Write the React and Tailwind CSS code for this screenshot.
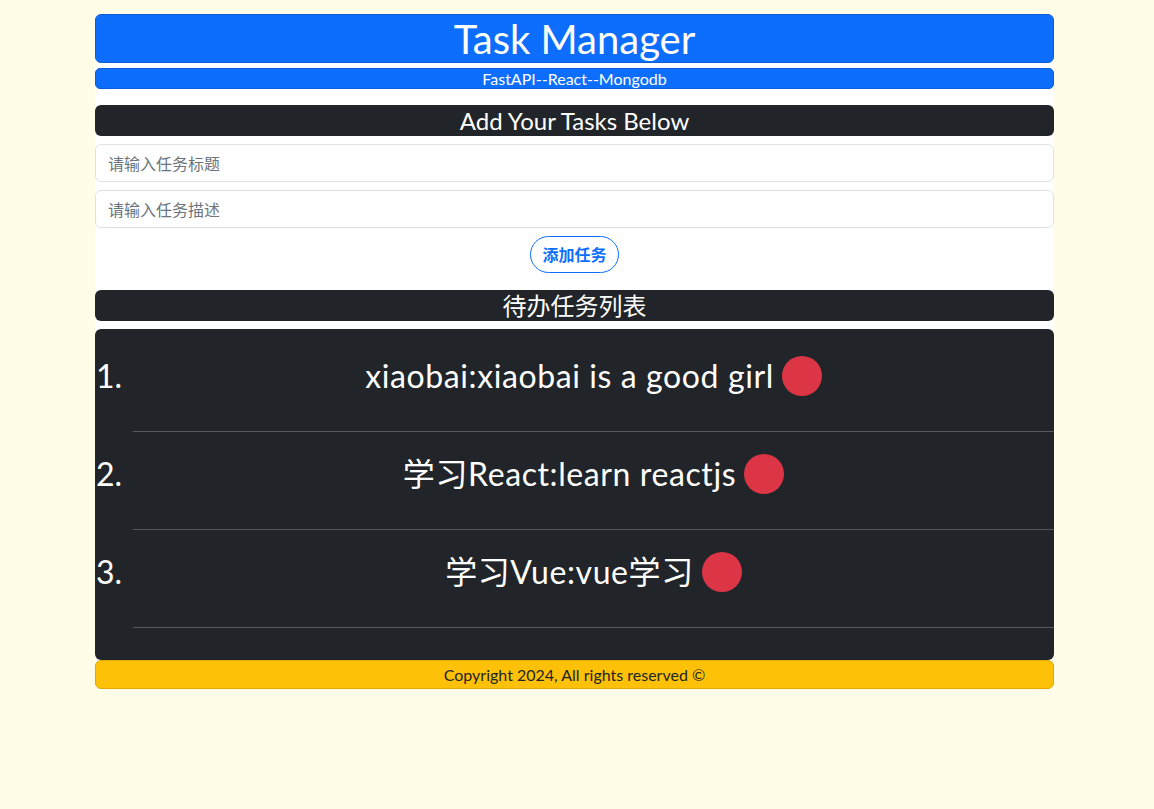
import React from "react";

const tasks = [
  { title: "xiaobai", desc: "xiaobai is a good girl" },
  { title: "学习React", desc: "learn reactjs" },
  { title: "学习Vue", desc: "vue学习" },
];

export default function App() {
  return (
    <div
      className="min-h-[809px] w-full bg-[#fffde8] pt-[14px]"
      style={{ fontFamily: '"Lato", "Noto Sans CJK SC", sans-serif' }}
    >
      <div className="ml-[95px] w-[959px] bg-white">
        <div className="flex h-[49px] items-center justify-center rounded-[6px] border border-[#0b5ed7] bg-[#0d6efd] text-[40px] leading-none text-white">
          Task Manager
        </div>
        <div className="mt-[5px] flex h-[21px] items-center justify-center rounded-[5px] border border-[#0b5ed7] bg-[#0d6efd] text-[16px] leading-none text-white">
          FastAPI--React--Mongodb
        </div>
        <div className="mt-[16px] flex h-[31px] items-center justify-center rounded-[6px] bg-[#212529] text-[24px] leading-none text-white">
          Add Your Tasks Below
        </div>
        <div className="mt-[8px] flex flex-col gap-[8px]">
          <input
            className="h-[38px] w-full rounded-[6px] border border-[#dee2e6] bg-white px-[12px] text-[16px] text-[#212529] outline-none placeholder:text-[#6c757d]"
            placeholder="请输入任务标题"
          />
          <input
            className="h-[38px] w-full rounded-[6px] border border-[#dee2e6] bg-white px-[12px] text-[16px] text-[#212529] outline-none placeholder:text-[#6c757d]"
            placeholder="请输入任务描述"
          />
        </div>
        <div className="mt-[8px] flex justify-center">
          <button className="flex h-[37px] w-[89px] items-center justify-center rounded-full border border-[#0d6efd] bg-white text-[16px] font-bold text-[#0d6efd]">
            添加任务
          </button>
        </div>
        <div className="mt-[17px] flex h-[31px] items-center justify-center rounded-[6px] bg-[#212529] text-[24px] leading-none text-white">
          待办任务列表
        </div>
        <div className="mt-[8px] rounded-[6px] bg-[#212529] pb-[32px] pt-[5px] text-white">
          {tasks.map((t, i) => (
            <div key={i} className="flex pt-[18px]">
              <div className="flex h-[48px] w-[38px] items-center pl-[1px] text-[32px] leading-none">
                {i + 1}.
              </div>
              <div className="flex flex-1 flex-col">
                <div className="flex h-[48px] items-center justify-center gap-[8px] text-[32px] leading-none tracking-[0.6px]">
                  <span>
                    {t.title}:{t.desc}
                  </span>
                  <span className="inline-block h-[40px] w-[40px] rounded-full bg-[#dc3545]" />
                </div>
                <div className="mt-[31px] h-px w-full bg-[#55595d]" />
              </div>
            </div>
          ))}
        </div>
        <div className="flex h-[29px] items-center justify-center rounded-[6px] border border-[#e0a800] bg-[#ffc107] text-[16px] leading-none text-[#212529]">
          Copyright 2024, All rights reserved ©
        </div>
      </div>
    </div>
  );
}
